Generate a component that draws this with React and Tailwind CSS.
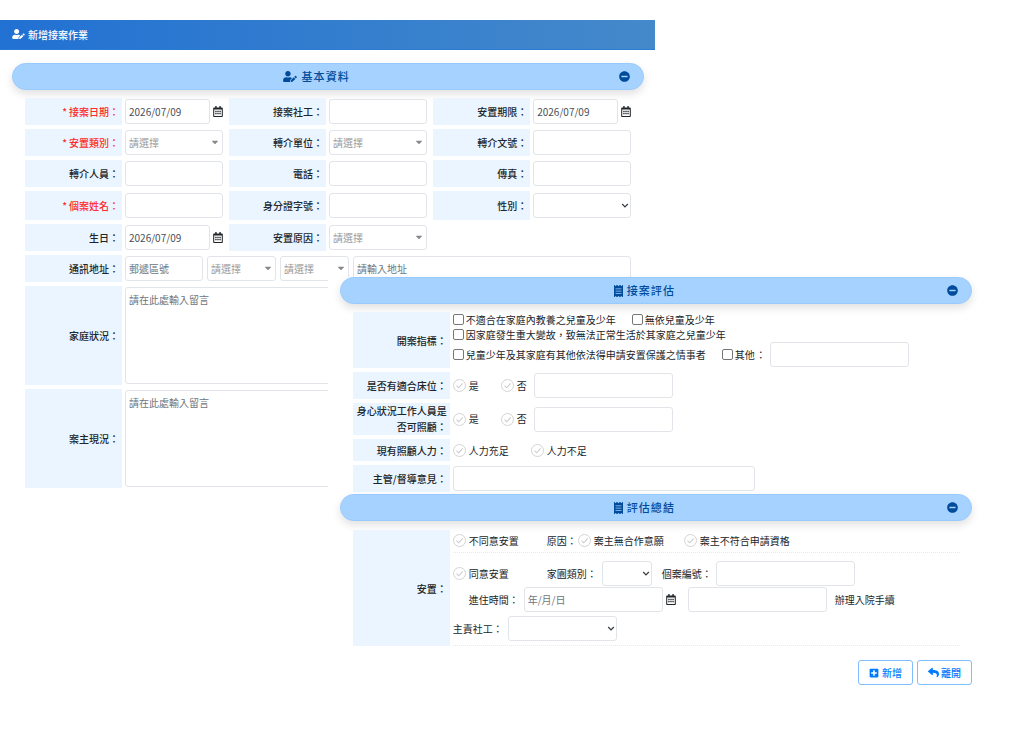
import { FaUserEdit, FaRegCalendarAlt, FaMinusCircle, FaReceipt, FaPlusSquare, FaReply, FaCaretDown } from "react-icons/fa";

const control = "h-[25px] min-w-0 rounded-[3px] border border-[#e1e4e8] bg-white px-[3px] text-[10px] text-[#495057] placeholder:text-[#6c757d] outline-none";

function SectionBar({ icon, title }) {
    return (
        <div className="mr-[11px] ml-3 flex h-[27px] items-center rounded-full border border-[#99caff] bg-[#a6d2ff] px-[13px] text-[#004b9b] shadow-[0_4px_8px_rgba(0,0,0,0.12)]">
            <h2 className="flex flex-1 items-center justify-center gap-1 pr-3 text-[11px] font-medium tracking-widest">
                {icon}
                {title}
            </h2>
            <button type="button" aria-label="收合">
                <FaMinusCircle className="size-[11px]" />
            </button>
        </div>
    )
}

function Field({ label, id, required, className = "", children }) {
    return (
        <div className={"flex gap-[3px] " + className}>
            <label htmlFor={id} className={"flex w-[97px] shrink-0 items-center justify-end bg-[#eaf5ff] pr-[3px] text-right font-medium " + (required ? "text-[#ff2a2a]" : "text-[#212529]")}>
                {required && <span className="mr-[2px]">*</span>}
                {label}：
            </label>
            {children}
        </div>
    )
}

function TextBox({ id, className = "flex-1", ...rest }) {
    return <input type="text" id={id} className={control + " " + className} {...rest} />
}

function DateBox({ id }) {
    return (
        <div className="flex min-w-0 flex-1 items-center gap-[3px]">
            <TextBox id={id} className="w-full flex-1" defaultValue="2026/07/09" />
            <FaRegCalendarAlt className="h-[11px] w-[10px] shrink-0 text-[#212529]" />
        </div>
    )
}

function PickBox({ id, label, className = "flex-1" }) {
    return (
        <div className={"relative flex min-w-0 " + className}>
            <select id={id} aria-label={label} className={control + " w-full appearance-none text-[#999999]"}>
                <option>請選擇</option>
            </select>
            <FaCaretDown className="pointer-events-none absolute top-[7px] right-[3px] size-[10px] text-[#888888]" />
        </div>
    )
}

function SelectBox({ id, className = "flex-1" }) {
    return (
        <div className={"relative flex min-w-0 " + className}>
            <select id={id} className={control + " w-full appearance-none"}>
                <option></option>
            </select>
            <svg viewBox="0 0 8 6" className="pointer-events-none absolute top-[10px] right-[2px] h-[6px] w-[8px]" fill="none" stroke="#343a40" strokeWidth="1.2">
                <path d="M1.2 1 4 3.8 6.8 1" />
            </svg>
        </div>
    )
}

function Check({ children }) {
    return (
        <label className="flex items-center gap-[2px]">
            <input type="checkbox" className="size-[11px] appearance-none rounded-[2px] border border-[#767676] bg-white" />
            {children}
        </label>
    )
}

function Radio({ name, children }) {
    return (
        <label className="flex items-center gap-[3px]">
            <span className="relative flex size-[13px]">
                <input type="radio" name={name} className="size-[13px] appearance-none rounded-full border border-[#d4d4d4] bg-white" />
                <svg viewBox="0 0 13 13" className="pointer-events-none absolute inset-0 size-[13px]" fill="none" stroke="#cccccc" strokeWidth="1.1">
                    <path d="M3.5 6.6 5.7 8.8 9.7 4.4" />
                </svg>
            </span>
            {children}
        </label>
    )
}

function BasicInfo() {
    return (
        <section className="col-span-2 col-start-1 row-start-1 pt-5">
            <h1 className="flex h-[30px] items-center gap-[3px] border-b border-[#2a7bd6] bg-linear-to-r from-[#2171d3] to-[#4489ca] px-3 pb-px text-[10px] font-medium text-white">
                <FaUserEdit className="h-[10px] w-[13px]" />
                新增接案作業
            </h1>
            <div className="pt-[13px]">
                <SectionBar icon={<FaUserEdit className="h-[11px] w-[14px]" />} title="基本資料" />
            </div>

            <div className="mt-2 flex flex-col gap-1 pr-6 pl-[25px]">
                <div className="grid grid-cols-3 items-stretch gap-x-[6px] gap-y-1">
                    <Field label="接案日期" id="caseDate" required className="h-[27px]">
                        <DateBox id="caseDate" />
                    </Field>
                    <Field label="接案社工" id="worker">
                        <TextBox id="worker" className="my-px flex-1" />
                    </Field>
                    <Field label="安置期限" id="deadline">
                        <DateBox id="deadline" />
                    </Field>

                    <Field label="安置類別" id="kind" required className="h-[27px]">
                        <PickBox id="kind" className="my-px flex-1" />
                    </Field>
                    <Field label="轉介單位" id="unit">
                        <PickBox id="unit" className="my-px flex-1" />
                    </Field>
                    <Field label="轉介文號" id="docNo">
                        <TextBox id="docNo" className="my-px flex-1" />
                    </Field>

                    <Field label="轉介人員" id="referrer" className="h-[27px]">
                        <TextBox id="referrer" className="my-px flex-1" />
                    </Field>
                    <Field label="電話" id="phone">
                        <TextBox id="phone" className="my-px flex-1" />
                    </Field>
                    <Field label="傳真" id="fax">
                        <TextBox id="fax" className="my-px flex-1" />
                    </Field>

                    <Field label="個案姓名" id="name" required className="h-[29px]">
                        <TextBox id="name" className="my-[2px] flex-1" />
                    </Field>
                    <Field label="身分證字號" id="idNo">
                        <TextBox id="idNo" className="my-[2px] flex-1" />
                    </Field>
                    <Field label="性別" id="sex">
                        <SelectBox id="sex" className="my-[2px] flex-1" />
                    </Field>

                    <Field label="生日" id="birthday" className="h-[27px]">
                        <DateBox id="birthday" />
                    </Field>
                    <Field label="安置原因" id="reason">
                        <PickBox id="reason" className="my-px flex-1" />
                    </Field>
                </div>

                <Field label="通訊地址" id="zip" className="h-[27px]">
                    <div className="flex flex-1 items-center gap-1">
                        <TextBox id="zip" className="w-[78px]" placeholder="郵遞區號" />
                        <PickBox label="縣市" className="w-[69px]" />
                        <PickBox label="鄉鎮市區" className="w-[69px]" />
                        <TextBox id="address" aria-label="地址" placeholder="請輸入地址" />
                    </div>
                </Field>
                <Field label="家庭狀況" id="family" className="h-[99px]">
                    <textarea id="family" className={control + " my-px h-auto flex-1 resize-none pt-1"} placeholder="請在此處輸入留言" />
                </Field>
                <Field label="案主現況" id="current" className="h-[99px]">
                    <textarea id="current" className={control + " my-px h-auto flex-1 resize-none pt-1"} placeholder="請在此處輸入留言" />
                </Field>
            </div>
        </section>
    )
}

function Assessment() {
    return (
        <section className="z-10 col-span-2 col-start-2 row-start-1 mt-[277px] bg-white">
            <SectionBar icon={<FaReceipt className="h-[12px] w-[9px]" />} title="接案評估" />

            <div className="mt-2 flex flex-col gap-1 px-[25px]">
                <Field label="開案指標">
                    <div className="flex flex-col pb-px">
                        <div className="flex h-[15px] items-center gap-4">
                            <Check>不適合在家庭內教養之兒童及少年</Check>
                            <Check>無依兒童及少年</Check>
                        </div>
                        <div className="flex h-[15px] items-center">
                            <Check>因家庭發生重大變故，致無法正常生活於其家庭之兒童少年</Check>
                        </div>
                        <div className="flex items-center">
                            <Check>兒童少年及其家庭有其他依法得申請安置保護之情事者</Check>
                            <span className="ml-4 flex items-center gap-px">
                                <Check>其他</Check>
                                ：
                            </span>
                            <TextBox aria-label="其他" className="ml-1 w-[139px]" />
                        </div>
                    </div>
                </Field>
                <Field label="是否有適合床位" className="h-[27px]">
                    <div className="flex items-center">
                        <div className="flex w-[81px] gap-[22px]">
                            <Radio name="bed">是</Radio>
                            <Radio name="bed">否</Radio>
                        </div>
                        <TextBox aria-label="床位說明" className="w-[139px]" />
                    </div>
                </Field>
                <Field label="身心狀況工作人員是否可照顧" className="h-[32px] leading-4">
                    <div className="flex items-center">
                        <div className="flex w-[81px] gap-[22px]">
                            <Radio name="care">是</Radio>
                            <Radio name="care">否</Radio>
                        </div>
                        <TextBox aria-label="照顧說明" className="w-[139px]" />
                    </div>
                </Field>
                <Field label="現有照顧人力" className="h-[22px]">
                    <div className="flex items-center gap-[22px]">
                        <Radio name="staff">人力充足</Radio>
                        <Radio name="staff">人力不足</Radio>
                    </div>
                </Field>
                <Field label="主管/督導意見" id="opinion" className="h-[27px]">
                    <TextBox id="opinion" className="my-px w-[302px]" />
                </Field>
            </div>
        </section>
    )
}

function Summary() {
    return (
        <section className="z-10 col-span-2 col-start-2 row-start-2 bg-white pt-[2px]">
            <SectionBar icon={<FaReceipt className="h-[12px] w-[9px]" />} title="評估總結" />

            <div className="mt-[9px] pr-[23px] pl-[25px]">
                <Field label="安置">
                    <div className="flex-1">
                        <div className="flex h-[23px] items-center border-b border-dotted border-[#e9e9e9] pb-[2px]">
                            <div className="w-[94px]">
                                <Radio name="agree">不同意安置</Radio>
                            </div>
                            原因：
                            <div className="ml-px flex gap-5">
                                <Radio name="why">案主無合作意願</Radio>
                                <Radio name="why">案主不符合申請資格</Radio>
                            </div>
                        </div>
                        <div className="flex items-center pt-2">
                            <div className="w-[94px]">
                                <Radio name="agree">同意安置</Radio>
                            </div>
                            <label htmlFor="home" className="mr-[5px]">家園類別：</label>
                            <SelectBox id="home" className="w-[50px]" />
                            <label htmlFor="caseNo" className="mr-1 ml-[10px]">個案編號：</label>
                            <TextBox id="caseNo" className="w-[139px]" />
                        </div>
                        <div className="flex items-center pt-px pl-4">
                            <label htmlFor="moveIn" className="mr-[5px]">進住時間：</label>
                            <TextBox id="moveIn" className="w-[139px]" placeholder="年/月/日" />
                            <FaRegCalendarAlt className="mr-3 ml-[3px] h-[11px] w-[10px] text-[#212529]" />
                            <TextBox id="moveInBy" aria-label="辦理人" className="mr-2 w-[139px]" />
                            辦理入院手續
                        </div>
                        <div className="flex items-center border-b border-dotted border-[#e9e9e9] pt-1 pb-1">
                            <label htmlFor="mainWorker" className="mr-[5px]">主責社工：</label>
                            <SelectBox id="mainWorker" className="w-[109px]" />
                        </div>
                    </div>
                </Field>
            </div>

            <div className="mt-[14px] flex justify-end gap-1 pr-[11px] text-[#007bff]">
                <button type="button" className="flex h-[25px] items-center gap-[3px] rounded-[3px] border border-[#80bdff] px-[10px] font-medium">
                    <FaPlusSquare className="size-[10px]" />
                    新增
                </button>
                <button type="button" className="flex h-[25px] items-center gap-[2px] rounded-[3px] border border-[#80bdff] px-[10px] font-medium">
                    <FaReply className="size-[11px]" />
                    離開
                </button>
            </div>
        </section>
    )
}

function App() {
    return (
        <main className="grid min-h-screen grid-cols-[32%_32%_32%] grid-rows-[auto_1fr] bg-white font-['Noto_Sans_CJK_TC',sans-serif] text-[10px] leading-[15px] text-[#212529]" lang="zh-TW">
            <BasicInfo />
            <Assessment />
            <Summary />
        </main>
    )
}

export default App;
